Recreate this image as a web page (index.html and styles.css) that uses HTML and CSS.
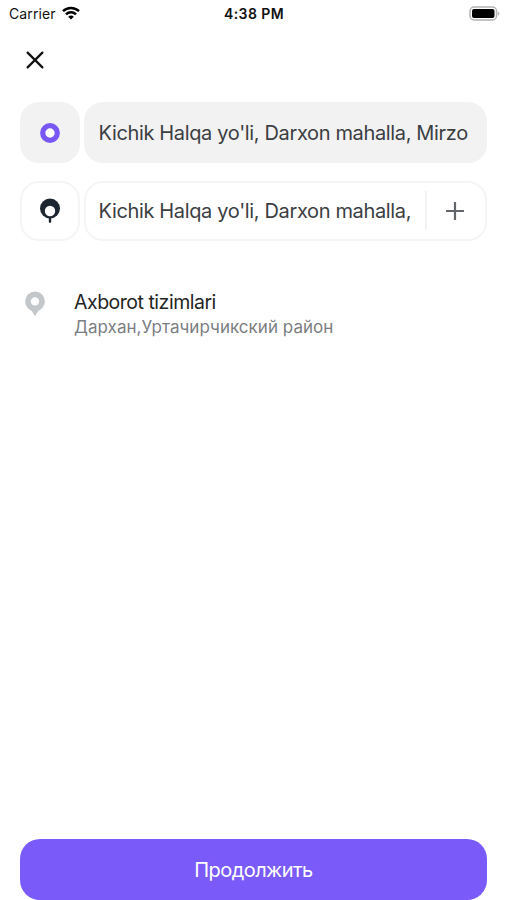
FILE: index.html
```html
<!DOCTYPE html>
<html lang="ru">
<head>
    <meta charset="UTF-8">
    <meta name="viewport" content="width=device-width, initial-scale=1.0">
    <title>Маршрут</title>
    <link rel="stylesheet" href="styles.css">
</head>
<body>

<div class="screen">
    <div class="status-bar">
        <div class="carrier">
            <span class="carrier-name">Carrier</span>
            <svg width="18" height="14" viewBox="0 0 18 14" fill="none" stroke="#000" stroke-width="2.5">
                <path d="M1 5.2 A11.4 11.4 0 0 1 17 5.2"/>
                <path d="M4 8.3 A7.1 7.1 0 0 1 14 8.3"/>
                <path d="M9 13.6 L6.2 10.8 A4 4 0 0 1 11.8 10.8 Z" fill="#000" stroke="none"/>
            </svg>
        </div>
        <span class="time">4:38 PM</span>
        <svg class="battery" width="31" height="15" viewBox="0 0 31 15">
            <rect x="1" y="1" width="26.5" height="13" rx="4" fill="#fff" stroke="#b3b3b3" stroke-width="1.5"/>
            <rect x="3" y="3" width="22.5" height="9" rx="2" fill="#000"/>
            <path d="M28.8 5.2 Q32 7.5 28.8 9.8 Z" fill="#b3b3b3"/>
        </svg>
    </div>

    <button class="close" type="button" aria-label="Закрыть">
        <svg width="18" height="18" viewBox="0 0 18 18" stroke="#111" stroke-width="2.2" stroke-linecap="round">
            <path d="M1.6 1.6 L16.4 16.4 M16.4 1.6 L1.6 16.4"/>
        </svg>
    </button>

    <div class="route">
        <div class="row row-from">
            <div class="marker">
                <svg width="20" height="20" viewBox="0 0 20 20">
                    <circle cx="10" cy="10" r="7.3" fill="#fff" stroke="#7857f5" stroke-width="5.2"/>
                </svg>
            </div>
            <div class="field">
                <span class="address">Kichik Halqa yo'li, Darxon mahalla, Mirzo</span>
            </div>
        </div>
        <div class="row row-to">
            <div class="marker">
                <svg width="20" height="26" viewBox="0 0 20 26">
                    <circle cx="10" cy="10.5" r="10" fill="#1c2530"/>
                    <path d="M8.8 19 H11.2 V24 Q10 26 8.8 24 Z" fill="#1c2530"/>
                    <circle cx="10" cy="13" r="5.2" fill="#fff"/>
                </svg>
            </div>
            <div class="field">
                <span class="address">Kichik Halqa yo'li, Darxon mahalla,</span>
                <button class="add" type="button" aria-label="Добавить">
                    <svg width="18" height="18" viewBox="0 0 18 18" stroke="#62666b" stroke-width="2.2">
                        <path d="M0 9 H18 M9 0 V18"/>
                    </svg>
                </button>
            </div>
        </div>
    </div>

    <div class="place">
        <svg width="20" height="26" viewBox="0 0 20 26">
            <path d="M10 .4 A9.8 9.8 0 0 1 19.8 10.2 C19.8 15 16.5 18.3 13.2 20 L10 25.2 L6.8 20 C3.5 18.3 .2 15 .2 10.2 A9.8 9.8 0 0 1 10 .4 Z" fill="#c4c7ca"/>
            <circle cx="10" cy="10.4" r="4.2" fill="#fff"/>
        </svg>
        <div class="place-text">
            <span class="place-name">Axborot tizimlari</span>
            <span class="place-region">Дархан,Уртачирчикский район</span>
        </div>
    </div>

    <button class="submit" type="button"><span class="submit-text">Продолжить</span></button>
</div>

</body>
</html>
```
FILE: styles.css
```css
* {
    box-sizing: border-box;
}
body {
    margin: 0;
    background-color: #fff;
    font-family: Inter, "Liberation Sans", sans-serif;
}
button {
    padding: 0;
    border: none;
    background: none;
    font-family: inherit;
    cursor: pointer;
}
svg {
    display: block;
    flex-shrink: 0;
}
span {
    white-space: nowrap;
}
.screen {
    display: flex;
    flex-direction: column;
    height: 900px;
    overflow: hidden;
}
.status-bar {
    display: grid;
    grid-template-columns: 1fr auto 1fr;
    align-items: center;
    height: 27px;
    padding: 0 7px 0 9px;
    color: #111;
}
.carrier {
    display: flex;
    align-items: center;
    gap: 6px;
    margin-top: -1px;
}
.carrier-name {
    font-size: 14px;
    letter-spacing: 0.1px;
}
.time {
    margin-right: 1px;
    font-size: 14px;
    font-weight: 600;
    letter-spacing: 0.4px;
}
.battery {
    justify-self: end;
    margin-top: -1px;
}
.close {
    align-self: flex-start;
    margin: 24px 0 0 26px;
}
.route {
    display: flex;
    flex-direction: column;
    gap: 18px;
    padding: 33px 20px 0;
}
.row {
    display: flex;
    gap: 4px;
    height: 60.5px;
}
.marker,
.field {
    display: flex;
    align-items: center;
    border: 2px solid #f5f5f5;
    border-radius: 19px;
}
.marker {
    justify-content: center;
    width: 59.5px;
}
.field {
    flex: 1;
    justify-content: space-between;
    padding-left: 13px;
}
.row-from .marker,
.row-from .field {
    padding-top: 1px;
    background-color: #f2f2f2;
    border-color: #f2f2f2;
}
.address {
    font-size: 20px;
    letter-spacing: -0.35px;
    color: #3b3e42;
}
.add {
    display: flex;
    align-items: center;
    justify-content: center;
    width: 60px;
    height: 39px;
    border-left: 2px solid #f3f3f3;
}
.add svg {
    margin-right: 2px;
}
.place {
    display: flex;
    gap: 29px;
    padding: 50px 25px 0;
}
.place-text {
    display: flex;
    flex-direction: column;
    margin-top: -1px;
}
.place-name {
    font-size: 19.5px;
    line-height: 25px;
    letter-spacing: -0.48px;
    color: #242424;
}
.place-region {
    font-size: 17px;
    line-height: 25px;
    letter-spacing: 0.03px;
    color: #7b7e82;
}
.submit {
    height: 61px;
    margin: auto 20px 0;
    border-radius: 20px;
    background-color: #7a5af8;
    color: #fff;
    font-size: 20px;
    letter-spacing: -0.55px;
}
```
